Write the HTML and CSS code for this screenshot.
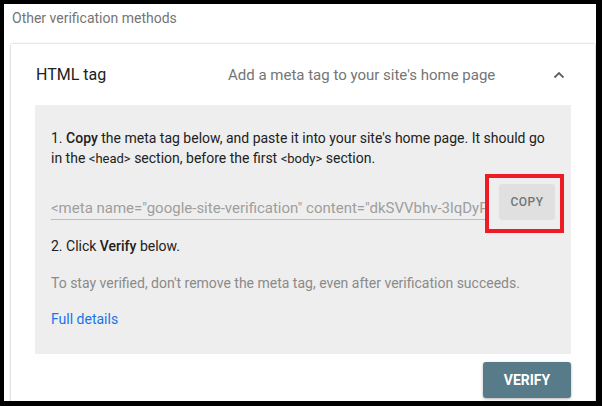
FILE: index.html
```html
<!DOCTYPE html>
<html lang="en">
<head>
  <meta charset="UTF-8" />
  <title>Other verification methods</title>
  <link rel="stylesheet" href="styles.css">
</head>
<body>
  <div class="frame">
    <div class="section-title">Other verification methods</div>

    <div class="card">
      <div class="card-header">
        <span class="method-name">HTML tag</span>
        <span class="method-desc">Add a meta tag to your site's home page</span>
        <svg class="chevron" width="12" height="8" viewBox="0 0 12 8">
          <path d="M1.5 6.5 L6 2 L10.5 6.5" fill="none" stroke="#616161" stroke-width="1.8"/>
        </svg>
      </div>

      <div class="panel">
        <p class="step">1. <b>Copy</b> the meta tag below, and paste it into your site's home page. It should go in the <code>&lt;head&gt;</code> section, before the first <code>&lt;body&gt;</code> section.</p>

        <div class="meta-row">
          <div class="meta-input">&lt;meta name="google-site-verification" content="dkSVVbhv-3lqDyPiXq0Zr1mT8cE" /&gt;</div>
          <button class="copy-btn">COPY<span class="highlight"></span></button>
        </div>

        <p class="step step-2">2. Click <b>Verify</b> below.</p>
        <p class="note">To stay verified, don't remove the meta tag, even after verification succeeds.</p>
        <a class="details" href="#">Full details</a>
      </div>

      <div class="card-footer">
        <button class="verify-btn">VERIFY</button>
      </div>
    </div>
  </div>
</body>
</html>
```

FILE: styles.css
```css
body {
  margin: 0;
  background: #000;
  font-family: Roboto, "Liberation Sans", Arial, sans-serif;
  color: #212121;
}
.frame {
  margin: 4px 0 0 4px;
  width: 592px;
  height: 397px;
  background: #fff;
  overflow: hidden;
}
.section-title {
  padding: 4px 0 0 8px;
  font-size: 14px;
  line-height: 20px;
  color: #757575;
}
.card {
  margin: 16px 1px 0 7px;
  background: #fff;
  box-shadow: 0 0 2px rgba(0, 0, 0, 0.25), 0 1px 3px rgba(0, 0, 0, 0.1);
  padding: 0 24px 8px 24px;
}
.card-header {
  height: 61px;
  display: flex;
  align-items: center;
  padding-left: 1px;
}
.method-name {
  width: 192px;
  font-size: 16px;
  color: #212121;
}
.method-desc {
  flex: 1;
  font-size: 15px;
  color: #757575;
}
.chevron {
  margin-right: 6px;
}
.panel {
  background: #eeeeee;
  padding: 23px 16px 25px 16px;
  font-size: 14px;
  line-height: 20px;
}
.panel p {
  margin: 0;
}
.step b {
  font-weight: 500;
}
code {
  font-family: Roboto, sans-serif;
  font-size: 13px;
}
.meta-row {
  display: flex;
  align-items: flex-end;
  gap: 14px;
  margin-top: 15px;
}
.meta-input {
  flex: 1;
  white-space: nowrap;
  overflow: hidden;
  font-size: 15px;
  color: #9e9e9e;
  border-bottom: 1px solid #bdbdbd;
  line-height: 20px;
  padding-bottom: 1px;
}
.copy-btn {
  position: relative;
  width: 56px;
  height: 36px;
  border: none;
  border-radius: 3px;
  background: #e0e0e0;
  color: #757575;
  font-family: Roboto, sans-serif;
  font-size: 12px;
  font-weight: 500;
  letter-spacing: 0.5px;
  padding: 0;
}
.highlight {
  position: absolute;
  left: -14px;
  top: -10px;
  right: -9px;
  bottom: -13px;
  border: 4px solid #ed1c24;
}
.step-2 {
  margin-top: 16px !important;
}
.note {
  margin-top: 17px !important;
  color: #8a8a8a;
}
.details {
  display: block;
  margin-top: 16px;
  color: #1a73e8;
  text-decoration: none;
}
.card-footer {
  display: flex;
  justify-content: flex-end;
  padding-top: 8px;
}
.verify-btn {
  width: 88px;
  height: 36px;
  border: none;
  border-radius: 3px;
  background: #587b89;
  color: #fff;
  font-family: Roboto, sans-serif;
  font-size: 14px;
  font-weight: 700;
  box-shadow: 0 1px 3px rgba(0, 0, 0, 0.3);
}
```
